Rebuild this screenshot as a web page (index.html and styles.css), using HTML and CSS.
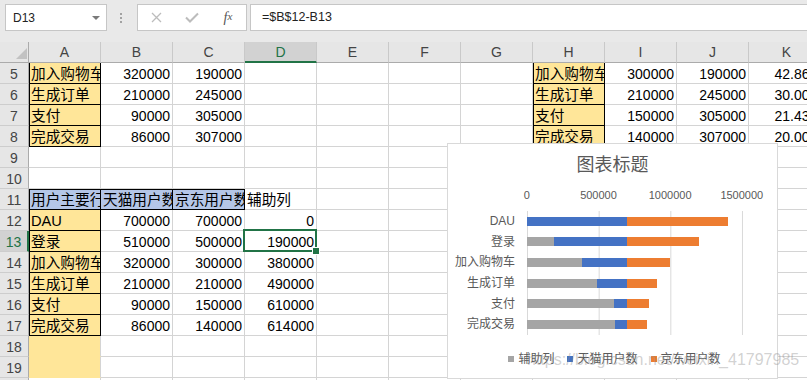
FILE: index.html
```html
<!DOCTYPE html>
<html lang="zh">
<head>
    <meta charset="UTF-8">
    <meta name="viewport" content="width=device-width, initial-scale=1.0">
    <title>漏斗图 - Excel</title>
    <link rel="stylesheet" href="styles.css">
</head>
<body>

<div class="page">
    <!-- name box + formula bar -->
    <div class="topbar">
        <div class="namebox"><span>D13</span><span class="caret"></span></div>
        <div class="grip"><i></i><i></i><i></i></div>
        <div class="fbtns">
            <span><svg width="11" height="11" viewBox="0 0 11 11"><path d="M1 1L10 10M10 1L1 10" stroke="#bcbcbc" stroke-width="1.3" fill="none"/></svg></span>
            <span><svg width="14" height="11" viewBox="0 0 14 11"><path d="M1 5.5L5 9.5L13 1.5" stroke="#bcbcbc" stroke-width="2" fill="none"/></svg></span>
            <span class="fx">f<sub>x</sub></span>
        </div>
        <div class="formula">=$B$12-B13</div>
    </div>

    <div class="sheet">
        <!-- column headers -->
        <div class="ch corner"><svg width="11" height="11" viewBox="0 0 11 11"><path d="M0 11L11 0V11Z" fill="#c2c2c2"/></svg></div>
        <div class="ch">A</div><div class="ch">B</div><div class="ch">C</div><div class="ch on">D</div>
        <div class="ch">E</div><div class="ch">F</div><div class="ch">G</div><div class="ch">H</div>
        <div class="ch">I</div><div class="ch">J</div><div class="ch">K</div>

        <!-- 5 -->
        <div class="rh">5</div>
        <div class="yel bx bl">加入购物车</div><div class="n">320000</div><div class="n">190000</div>
        <div></div><div></div><div></div><div></div>
        <div class="yel bx bl">加入购物车</div><div class="n">300000</div><div class="n">190000</div><div class="n">42.86%</div>
        <!-- 6 -->
        <div class="rh">6</div>
        <div class="yel bx bl">生成订单</div><div class="n">210000</div><div class="n">245000</div>
        <div></div><div></div><div></div><div></div>
        <div class="yel bx bl">生成订单</div><div class="n">210000</div><div class="n">245000</div><div class="n">30.00%</div>
        <!-- 7 -->
        <div class="rh">7</div>
        <div class="yel bx bl">支付</div><div class="n">90000</div><div class="n">305000</div>
        <div></div><div></div><div></div><div></div>
        <div class="yel bx bl">支付</div><div class="n">150000</div><div class="n">305000</div><div class="n">21.43%</div>
        <!-- 8 -->
        <div class="rh">8</div>
        <div class="yel bx bl">完成交易</div><div class="n">86000</div><div class="n">307000</div>
        <div></div><div></div><div></div><div></div>
        <div class="yel bx bl">完成交易</div><div class="n">140000</div><div class="n">307000</div><div class="n">20.00%</div>
        <!-- 9 -->
        <div class="rh">9</div>
        <div></div><div></div><div></div><div></div><div></div><div></div><div></div><div></div><div></div><div></div><div></div>
        <!-- 10 -->
        <div class="rh">10</div>
        <div></div><div></div><div></div><div></div><div></div><div></div><div></div><div></div><div></div><div></div><div></div>
        <!-- 11 -->
        <div class="rh">11</div>
        <div class="blu bx btl">用户主要行为</div><div class="blu bx bt">天猫用户数</div><div class="blu bx bt">京东用户数</div>
        <div>辅助列</div>
        <div></div><div></div><div></div><div></div><div></div><div></div><div></div>
        <!-- 12 -->
        <div class="rh">12</div>
        <div class="yel bx bl">DAU</div><div class="n">700000</div><div class="n">700000</div><div class="n">0</div>
        <div></div><div></div><div></div><div></div><div></div><div></div><div></div>
        <!-- 13 -->
        <div class="rh on">13</div>
        <div class="yel bx bl">登录</div><div class="n">510000</div><div class="n">500000</div><div class="n sel">190000</div>
        <div></div><div></div><div></div><div></div><div></div><div></div><div></div>
        <!-- 14 -->
        <div class="rh">14</div>
        <div class="yel bx bl">加入购物车</div><div class="n">320000</div><div class="n">300000</div><div class="n">380000</div>
        <div></div><div></div><div></div><div></div><div></div><div></div><div></div>
        <!-- 15 -->
        <div class="rh">15</div>
        <div class="yel bx bl">生成订单</div><div class="n">210000</div><div class="n">210000</div><div class="n">490000</div>
        <div></div><div></div><div></div><div></div><div></div><div></div><div></div>
        <!-- 16 -->
        <div class="rh">16</div>
        <div class="yel bx bl">支付</div><div class="n">90000</div><div class="n">150000</div><div class="n">610000</div>
        <div></div><div></div><div></div><div></div><div></div><div></div><div></div>
        <!-- 17 -->
        <div class="rh">17</div>
        <div class="yel bx bl">完成交易</div><div class="n">86000</div><div class="n">140000</div><div class="n">614000</div>
        <div></div><div></div><div></div><div></div><div></div><div></div><div></div>
        <!-- 18 -->
        <div class="rh">18</div>
        <div class="yel pad"></div>
        <div></div><div></div><div></div><div></div><div></div><div></div><div></div><div></div><div></div><div></div>
        <!-- 19 -->
        <div class="rh">19</div>
        <div class="yel pad"></div>
        <div></div><div></div><div></div><div></div><div></div><div></div><div></div><div></div><div></div><div></div>
        <!-- 20 -->
        <div class="rh">20</div>
        <div></div><div></div><div></div><div></div><div></div><div></div><div></div><div></div><div></div><div></div><div></div>
    </div>

    <!-- stacked bar chart (500000 = 71.67px) -->
    <div class="chart">
        <div class="chart-title">图表标题</div>
        <div class="axis">
            <span>0</span><span>500000</span><span>1000000</span><span>1500000</span>
        </div>
        <div class="plot">
            <div class="cat">DAU</div>
            <div class="track"><div class="bar"><i class="s-aux" style="width:0px"></i><i class="s-tm" style="width:100.3px"></i><i class="s-jd" style="width:100.3px"></i></div></div>
            <div class="cat">登录</div>
            <div class="track"><div class="bar"><i class="s-aux" style="width:27.2px"></i><i class="s-tm" style="width:73.1px"></i><i class="s-jd" style="width:71.7px"></i></div></div>
            <div class="cat">加入购物车</div>
            <div class="track"><div class="bar"><i class="s-aux" style="width:54.5px"></i><i class="s-tm" style="width:45.9px"></i><i class="s-jd" style="width:43px"></i></div></div>
            <div class="cat">生成订单</div>
            <div class="track"><div class="bar"><i class="s-aux" style="width:70.2px"></i><i class="s-tm" style="width:30.1px"></i><i class="s-jd" style="width:30.1px"></i></div></div>
            <div class="cat">支付</div>
            <div class="track"><div class="bar"><i class="s-aux" style="width:87.4px"></i><i class="s-tm" style="width:12.9px"></i><i class="s-jd" style="width:21.5px"></i></div></div>
            <div class="cat">完成交易</div>
            <div class="track"><div class="bar"><i class="s-aux" style="width:88px"></i><i class="s-tm" style="width:12.3px"></i><i class="s-jd" style="width:20.1px"></i></div></div>
        </div>
        <div class="legend">
            <span class="key"><i class="s-aux"></i>辅助列</span>
            <span class="key"><i class="s-tm"></i>天猫用户数</span>
            <span class="key"><i class="s-jd"></i>京东用户数</span>
        </div>
    </div>

    <div class="watermark">https://blog.csdn.net/weixin_41797985</div>
</div>

</body>
</html>
```

FILE: styles.css
```css
* {
    box-sizing: border-box;
    margin: 0;
    padding: 0;
}
html, body {
    width: 807px;
    height: 380px;
    overflow: hidden;
}
body {
    font-family: "Liberation Sans", "Noto Sans CJK SC", sans-serif;
    background-color: #fff;
    color: #000;
}
.page {
    position: relative;
    width: 807px;
    height: 380px;
    overflow: hidden;
}

/* formula bar */
.topbar {
    display: flex;
    align-items: flex-start;
    height: 42px;
    padding: 4px 0 0 5px;
    background-color: #e9e9e9;
}
.namebox {
    display: flex;
    align-items: center;
    justify-content: space-between;
    width: 102px;
    height: 27px;
    padding: 0 6px 0 7px;
    background-color: #fff;
    border: 1px solid #c6c6c6;
    font-size: 12px;
    color: #222;
}
.caret {
    border-left: 4px solid transparent;
    border-right: 4px solid transparent;
    border-top: 4px solid #7a7a7a;
}
.grip {
    display: flex;
    flex-direction: column;
    gap: 2px;
    margin: 9px 0 0 13px;
}
.grip i {
    width: 2px;
    height: 2px;
    background-color: #a2a2a2;
}
.fbtns {
    display: flex;
    align-items: center;
    width: 110px;
    height: 27px;
    margin-left: 15px;
    background-color: #fff;
    border: 1px solid #c6c6c6;
}
.fbtns > span {
    display: flex;
    justify-content: center;
    width: 36px;
}
.fx {
    font-family: "Liberation Serif", serif;
    font-style: italic;
    font-size: 14px;
    color: #555;
}
.fx sub {
    font-size: 11px;
    vertical-align: -1px;
}
.formula {
    flex: 1;
    height: 27px;
    margin-left: 3px;
    padding-left: 11px;
    background-color: #fff;
    border: 1px solid #c6c6c6;
    border-right: 0;
    font-size: 12.5px;
    line-height: 25px;
    color: #222;
}

/* grid */
.sheet {
    display: grid;
    grid-template-columns: 29px repeat(10, 72px) 76px;
    grid-auto-rows: 21px;
    width: 825px;
    font-size: 14.67px;
}
.sheet > div {
    padding: 2px 2px 0;
    line-height: 18px;
    white-space: nowrap;
    overflow: hidden;
    border-right: 1px solid #d4d4d4;
    border-bottom: 1px solid #d4d4d4;
}
.sheet .ch {
    padding: 0;
    line-height: 21px;
    text-align: center;
    font-size: 14px;
    color: #444;
    background-color: #e6e6e6;
    border-right-color: #c9c9c9;
    border-bottom-color: #ababab;
}
.sheet .corner {
    display: flex;
    align-items: flex-end;
    justify-content: flex-end;
    padding: 0 1px 3px 0;
    border-right-color: #ababab;
}
.sheet .rh {
    padding: 1px 0 0;
    line-height: 20px;
    text-align: center;
    font-size: 14px;
    color: #444;
    background-color: #e6e6e6;
    border-right-color: #ababab;
    border-bottom-color: #cdcdcd;
}
.sheet .ch.on {
    color: #217346;
    background-color: #d2d2d2;
    border-bottom: 2px solid #217346;
}
.sheet .rh.on {
    color: #217346;
    background-color: #d2d2d2;
    border-right: 2px solid #217346;
}
.sheet .n {
    text-align: right;
    font-size: 14px;
}
.sheet .yel {
    background-color: #ffe699;
}
.sheet .blu {
    background-color: #b4c6e7;
}
.sheet .bx {
    border-right-color: #000;
    border-bottom-color: #000;
}
.sheet .bl {
    box-shadow: inset 1px 0 0 #000;
}
.sheet .bt {
    box-shadow: inset 0 1px 0 #000;
}
.sheet .btl {
    box-shadow: inset 1px 1px 0 #000;
}
.sheet .pad {
    border-bottom-color: #ffe699;
}
.sheet .sel {
    position: relative;
    overflow: visible;
    z-index: 2;
}
.sel::after {
    content: "";
    position: absolute;
    left: -2px;
    top: -2px;
    right: -1px;
    bottom: -1px;
    border: 2px solid #217346;
}
.sel::before {
    content: "";
    position: absolute;
    right: -4px;
    bottom: -4px;
    width: 6px;
    height: 6px;
    background-color: #217346;
    border: 1px solid #fff;
    z-index: 1;
}

/* chart */
.chart {
    position: absolute;
    left: 447px;
    top: 143px;
    width: 331px;
    height: 236px;
    background-color: #fff;
    border: 1px solid #d9d9d9;
    color: #595959;
    z-index: 3;
}
.chart-title {
    margin-top: 9px;
    font-size: 18px;
    line-height: 24px;
    text-align: center;
}
.axis {
    display: flex;
    margin: 10px 0 0 43px;
    font-size: 11px;
    line-height: 16px;
}
.axis span {
    flex: none;
    width: 71.67px;
    text-align: center;
}
.plot {
    display: grid;
    grid-template-columns: 67px 216px;
    grid-auto-rows: 20.67px;
    column-gap: 12px;
    margin-top: 8px;
    font-size: 12px;
}
.cat {
    text-align: right;
    line-height: 20.67px;
    white-space: nowrap;
}
.track {
    display: flex;
    align-items: center;
    background: linear-gradient(to right, #d9d9d9 1px, transparent 1px) 0 0 / 71.67px 100% repeat-x;
}
.bar {
    display: flex;
    height: 9px;
}
.bar i {
    flex: none;
}
.s-aux {
    background-color: #a5a5a5;
}
.s-tm {
    background-color: #4472c4;
}
.s-jd {
    background-color: #ed7d31;
}
.legend {
    display: flex;
    justify-content: center;
    gap: 13px;
    margin-top: 16px;
    padding-left: 4px;
    font-size: 12px;
    line-height: 16px;
}
.key {
    display: flex;
    align-items: center;
    gap: 4px;
}
.key i {
    width: 6px;
    height: 6px;
}
.watermark {
    position: absolute;
    left: 527px;
    top: 351px;
    font-size: 16px;
    white-space: nowrap;
    color: rgba(140, 140, 140, 0.4);
    z-index: 4;
}
```
